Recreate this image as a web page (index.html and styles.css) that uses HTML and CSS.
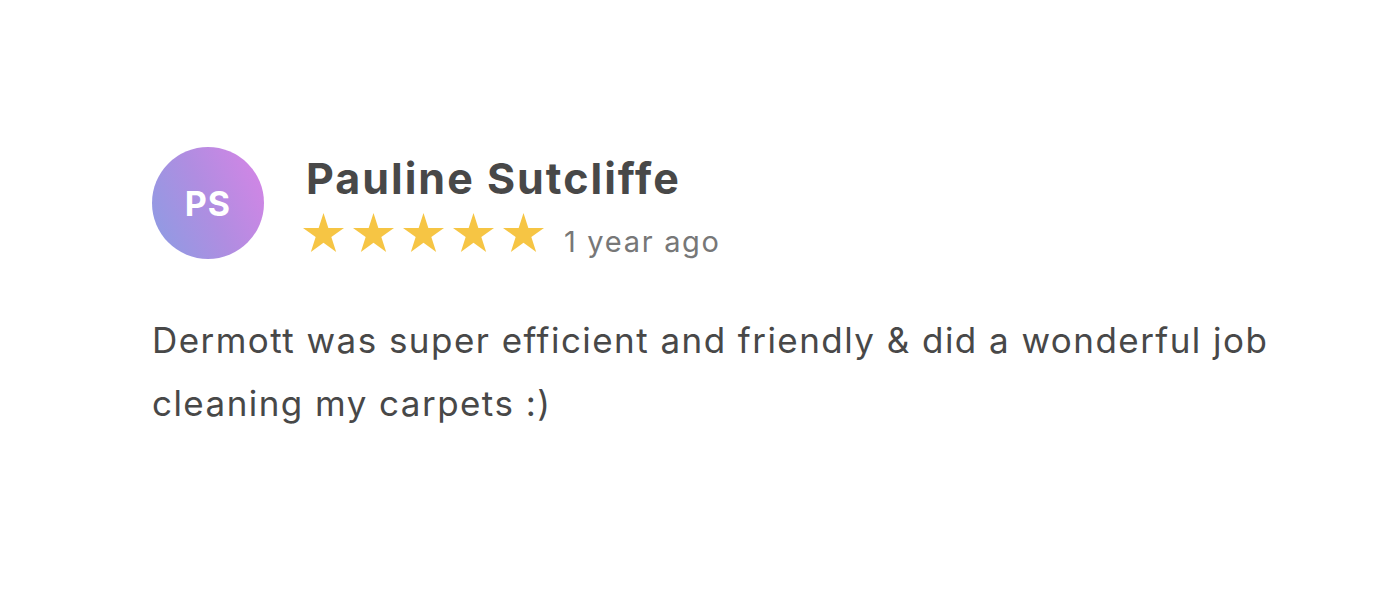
FILE: index.html
```html
<!DOCTYPE html>
<html>
<head>
<meta charset="utf-8">
<link rel="stylesheet" href="styles.css">
</head>
<body>
<div class="review">
  <div class="header">
    <div class="avatar">PS</div>
    <div class="meta">
      <div class="name">Pauline Sutcliffe</div>
      <div class="rating">
        <div class="stars">
          <svg class="star" viewBox="0 0 41 39"><path d="M20.5 0L25.34 14.89 41 14.9 28.34 24.11 33.17 39 20.5 29.8 7.83 39 12.66 24.11 0 14.9 15.66 14.89Z"/></svg>
          <svg class="star" viewBox="0 0 41 39"><path d="M20.5 0L25.34 14.89 41 14.9 28.34 24.11 33.17 39 20.5 29.8 7.83 39 12.66 24.11 0 14.9 15.66 14.89Z"/></svg>
          <svg class="star" viewBox="0 0 41 39"><path d="M20.5 0L25.34 14.89 41 14.9 28.34 24.11 33.17 39 20.5 29.8 7.83 39 12.66 24.11 0 14.9 15.66 14.89Z"/></svg>
          <svg class="star" viewBox="0 0 41 39"><path d="M20.5 0L25.34 14.89 41 14.9 28.34 24.11 33.17 39 20.5 29.8 7.83 39 12.66 24.11 0 14.9 15.66 14.89Z"/></svg>
          <svg class="star" viewBox="0 0 41 39"><path d="M20.5 0L25.34 14.89 41 14.9 28.34 24.11 33.17 39 20.5 29.8 7.83 39 12.66 24.11 0 14.9 15.66 14.89Z"/></svg>
        </div>
        <span class="time">1 year ago</span>
      </div>
    </div>
  </div>
  <p class="text">Dermott was super efficient and friendly &amp; did a wonderful job cleaning my carpets :)</p>
</div>
</body>
</html>
```
FILE: styles.css
```css
html, body {
  margin: 0;
  padding: 0;
  background: #ffffff;
}
body {
  font-family: "Inter", "Open Sans", sans-serif;
  color: #484848;
  font-variant-ligatures: none;
}
.review {
  padding: 147px 0 0 152px;
  width: 1140px;
}
.header {
  display: flex;
  align-items: flex-start;
  gap: 42px;
}
.avatar {
  width: 112px;
  height: 112px;
  border-radius: 50%;
  background: linear-gradient(65deg, #8a9de3 0%, #b08de1 50%, #d884e6 100%);
  color: #ffffff;
  display: flex;
  align-items: center;
  justify-content: center;
  font-size: 34px;
  font-weight: 700;
  letter-spacing: 1px;
  flex-shrink: 0;
}
.meta {
  display: flex;
  flex-direction: column;
  padding-top: 3px;
}
.name {
  font-size: 43px;
  font-weight: 700;
  line-height: 56px;
  letter-spacing: 2px;
  color: #484848;
}
.rating {
  display: flex;
  align-items: baseline;
  gap: 20px;
  margin-top: 7px;
  margin-left: -3px;
}
.stars {
  display: flex;
  gap: 9px;
}
.star {
  width: 41px;
  height: 39px;
  fill: #f6c544;
  display: block;
}
.time {
  font-size: 29px;
  letter-spacing: 1.7px;
  color: #777777;
}
.text {
  margin: 50px 0 0 0;
  font-size: 35px;
  line-height: 63px;
  letter-spacing: 1.45px;
  color: #484848;
}
```
